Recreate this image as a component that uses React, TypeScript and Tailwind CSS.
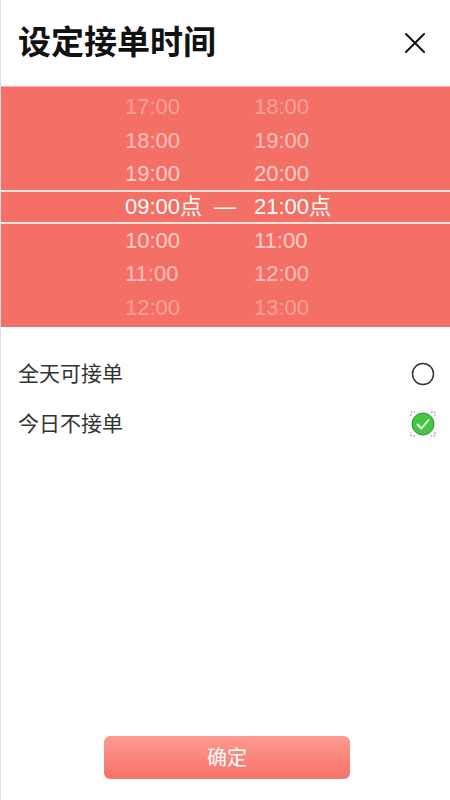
const font = { fontFamily: '"Liberation Sans", "Noto Sans CJK SC", sans-serif' };

const above = [
  { l: "17:00", r: "18:00", c: "text-white/35" },
  { l: "18:00", r: "19:00", c: "text-white/55" },
  { l: "19:00", r: "20:00", c: "text-white/65" },
];
const below = [
  { l: "10:00", r: "11:00", c: "text-white/65" },
  { l: "11:00", r: "12:00", c: "text-white/55" },
  { l: "12:00", r: "13:00", c: "text-white/35" },
];

const Row = ({ l, r, c }: { l: string; r: string; c: string }) => (
  <div className={`flex h-[33.4px] items-center pl-[124px] text-[22px] ${c}`}>
    <span className="w-[129px]">{l}</span>
    <span>{r}</span>
  </div>
);

const Radio = () => (
  <svg width="24" height="24" viewBox="0 0 24 24">
    <circle cx="12" cy="12" r="10.5" fill="none" stroke="#333" strokeWidth="1.5" />
  </svg>
);

const Checked = () => (
  <svg width="26" height="26" viewBox="0 0 26 26">
    <circle cx="13" cy="13" r="11" fill="#44c844" stroke="#2f8f2f" strokeWidth="1" />
    <path d="M7.5 13.5 L11.5 17.5 L18.5 9" fill="none" stroke="#fff" strokeWidth="1.8" strokeLinecap="round" strokeLinejoin="round" />
    <g stroke="#888" strokeWidth="1" fill="none" strokeDasharray="2 1.5">
      <path d="M1 5 V1 H5" />
      <path d="M21 1 H25 V5" />
      <path d="M25 21 V25 H21" />
      <path d="M5 25 H1 V21" />
    </g>
  </svg>
);

export default function App() {
  return (
    <div style={font} className="flex h-[800px] w-[450px] flex-col border-l border-[#d9ddf0] bg-white">
      <div className="flex h-[86px] items-center justify-between pl-[17px] pr-[24px]">
        <h1 className="text-[33px] font-bold text-[#111]">设定接单时间</h1>
        <svg width="22" height="22" viewBox="0 0 22 22">
          <path d="M2 2 L20 20 M20 2 L2 20" stroke="#111" strokeWidth="2" strokeLinecap="round" />
        </svg>
      </div>

      <div className="flex h-[241px] flex-col border-t border-[#f8aaa4] bg-[#f46f66] py-[3px]">
        {above.map((x) => (
          <Row key={x.l} {...x} />
        ))}
        <div className="flex h-[33.4px] items-center border-y-2 border-white/80 pl-[124px] text-[22px] text-white">
          <span className="flex w-[129px] items-center">
            09:00点<span className="ml-[12px]">—</span>
          </span>
          <span>21:00点</span>
        </div>
        {below.map((x) => (
          <Row key={x.l} {...x} />
        ))}
      </div>

      <div className="mt-[22px] flex flex-col">
        <div className="flex h-[50px] items-center justify-between pl-[17px] pr-[15px]">
          <span className="text-[21px] text-[#333]">全天可接单</span>
          <Radio />
        </div>
        <div className="flex h-[50px] items-center justify-between pl-[17px] pr-[14px]">
          <span className="text-[21px] text-[#333]">今日不接单</span>
          <Checked />
        </div>
      </div>

      <div className="mt-auto mb-[21px] flex justify-center">
        <button className="ml-[3px] h-[43px] w-[246px] rounded-[6px] bg-gradient-to-b from-[#ff9a8f] to-[#f5716a] text-[20px] text-white">
          确定
        </button>
      </div>
    </div>
  );
}
